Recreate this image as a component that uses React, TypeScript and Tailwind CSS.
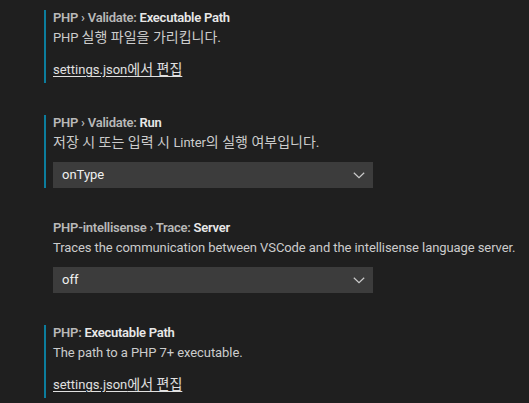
import React from "react";

const fontStack = { fontFamily: '"Segoe UI", Roboto, "Noto Sans CJK KR", sans-serif' };

const Chevron = () => (
  <svg width="16" height="16" viewBox="0 0 16 16" fill="none" className="text-[#cccccc]">
    <path d="M2.8 5.8 L8 10.6 L13.2 5.8" stroke="currentColor" strokeWidth="1.2" />
  </svg>
);

const Title = ({ category, name }: { category: string; name: string }) => (
  <div className="h-[16px] whitespace-nowrap text-[13px] leading-[16px] font-semibold tracking-[-0.25px]">
    <span className="text-[#b8b8b8]">{category}</span>
    <span className="text-[#e8e8e8]">{name}</span>
  </div>
);

const Desc = ({ children }: { children: React.ReactNode }) => (
  <div className="mt-[3px] h-[18px] whitespace-nowrap text-[13px] leading-[18px] tracking-[-0.08px] text-[#cccccc]">
    {children}
  </div>
);

// Korean runs come out a touch narrow in Noto CJK, bump them slightly
const Ko = ({ children }: { children: React.ReactNode }) => (
  <span className="text-[14px] leading-[0] tracking-normal">{children}</span>
);

const Select = ({ value }: { value: string }) => (
  <div className="mt-[10px] flex h-[26px] w-[320px] items-center justify-between bg-[#3c3c3c] pl-[9px] pr-[6px] text-[13px] text-[#f0f0f0]">
    <span>{value}</span>
    <Chevron />
  </div>
);

const EditLink = () => (
  <div className="mt-[14px] mb-[4px] h-[18px] text-[13px] leading-[18px]">
    <span className="text-[#e0e0e0] underline underline-offset-2">
      settings.json<Ko>에서 편집</Ko>
    </span>
  </div>
);

const Item = ({ modified, children }: { modified?: boolean; children: React.ReactNode }) => (
  <div className={modified ? "border-l-2 border-[#0c7d9d] pl-[7px]" : "border-l-2 border-transparent pl-[7px]"}>
    {children}
  </div>
);

export default function App() {
  return (
    <div className="h-[403px] w-[529px] overflow-hidden bg-[#1f1f1f] pl-[44px] pt-[10px]" style={fontStack}>
      <div className="flex flex-col gap-[32px]">
        <Item modified>
          <Title category="PHP › Validate: " name="Executable Path" />
          <Desc>
            PHP <Ko>실행 파일을 가리킵니다.</Ko>
          </Desc>
          <EditLink />
        </Item>
        <Item modified>
          <Title category="PHP › Validate: " name="Run" />
          <Desc>
            <Ko>저장 시 또는 입력 시 </Ko>Linter<Ko>의 실행 여부입니다.</Ko>
          </Desc>
          <Select value="onType" />
        </Item>
        <Item>
          <Title category="PHP-intellisense › Trace: " name="Server" />
          <Desc>Traces the communication between VSCode and the intellisense language server.</Desc>
          <Select value="off" />
        </Item>
        <Item modified>
          <Title category="PHP: " name="Executable Path" />
          <Desc>The path to a PHP 7+ executable.</Desc>
          <EditLink />
        </Item>
      </div>
    </div>
  );
}
